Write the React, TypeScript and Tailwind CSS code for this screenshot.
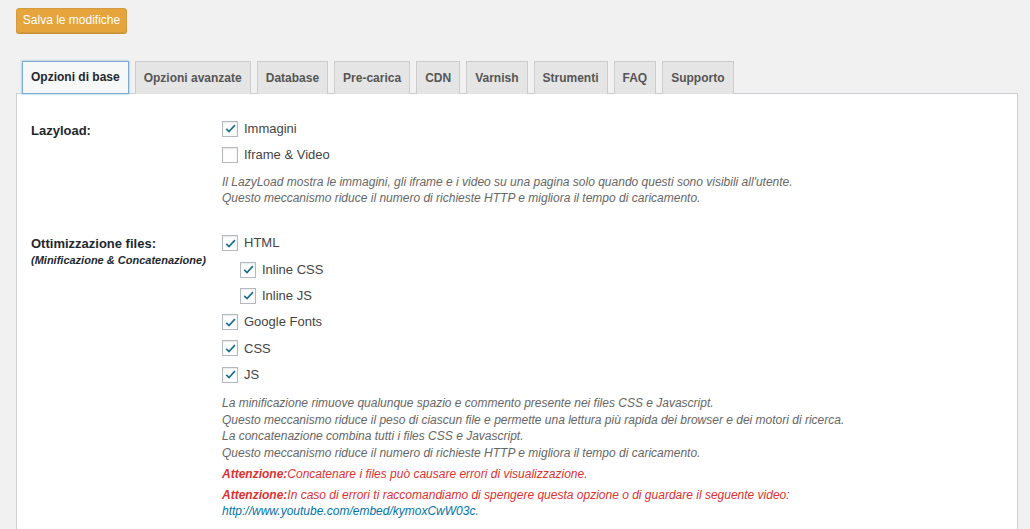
import React from 'react'

const font = { fontFamily: '"Liberation Sans", Arial, sans-serif' }

const tabs = ['Opzioni di base', 'Opzioni avanzate', 'Database', 'Pre-carica', 'CDN', 'Varnish', 'Strumenti', 'FAQ', 'Supporto']

const Check: React.FC<{ checked?: boolean; label: string; indent?: boolean }> = ({ checked, label, indent }) => (
  <div className={`flex items-center h-[26.3px] ${indent ? 'pl-[18px]' : ''}`}>
    <span className="w-[16px] h-[16px] border border-[#b4b9be] bg-white shadow-[inset_0_1px_2px_rgba(0,0,0,0.1)] flex items-center justify-center">
      {checked && (
        <svg width="13" height="13" viewBox="0 0 20 20">
          <path d="M3.5 10.5l4.2 4.2L16.8 4.8" fill="none" stroke="#1e6e8c" strokeWidth="2.6" />
        </svg>
      )}
    </span>
    <span className="ml-[6px] text-[13px] text-[#444]">{label}</span>
  </div>
)

export default function App() {
  return (
    <div className="min-h-screen bg-[#f1f1f1] pl-[16px] pr-[12px] pt-[7px] overflow-hidden" style={font}>
      <button className="h-[25px] w-[111px] rounded-[3px] bg-[#e6a43c] border border-[#d39a3f] text-white text-[12px] shadow-[0_1px_0_#c99036]">
        Salva le modifiche
      </button>

      {/* tabs */}
      <div className="flex gap-[6px] pl-[6px] mt-[28px]">
        {tabs.map((t, i) => (
          <div
            key={t}
            className={`h-[33px] px-[8px] flex items-center text-[12px] font-semibold border ${
              i === 0
                ? 'bg-[#f6f7f7] border-[#7ea9d4] text-[#23282d] shadow-[0_0_2px_rgba(30,140,190,0.6)] relative z-10'
                : 'bg-[#e5e5e5] border-[#ccc] border-b-0 text-[#555]'
            }`}
          >
            {t}
          </div>
        ))}
      </div>

      <div className="bg-white border border-[#ccd0d4] -mt-px h-[460px] pl-[14px] pt-[22px]">
        {/* Lazyload */}
        <div className="flex">
          <div className="w-[191px] pt-[5px] text-[13px] font-semibold text-[#23282d]">Lazyload:</div>
          <div>
            <Check checked label="Immagini" />
            <Check label="Iframe & Video" />
            <div className="mt-[6px] text-[12px] italic leading-[16px] text-[#666]">
              <p>Il LazyLoad mostra le immagini, gli iframe e i video su una pagina solo quando questi sono visibili all'utente.</p>
              <p>Questo meccanismo riduce il numero di richieste HTTP e migliora il tempo di caricamento.</p>
            </div>
          </div>
        </div>

        {/* Ottimizzazione */}
        <div className="flex mt-[24px]">
          <div className="w-[191px] pt-[5px] text-[13px] font-semibold text-[#23282d] leading-[17px]">
            <p>Ottimizzazione files:</p>
            <p className="italic text-[11px]">(Minificazione &amp; Concatenazione)</p>
          </div>
          <div>
            <Check checked label="HTML" />
            <Check checked indent label="Inline CSS" />
            <Check checked indent label="Inline JS" />
            <Check checked label="Google Fonts" />
            <Check checked label="CSS" />
            <Check checked label="JS" />
            <div className="mt-[7px] text-[12px] italic leading-[16.7px] text-[#666]">
              <p>La minificazione rimuove qualunque spazio e commento presente nei files CSS e Javascript.</p>
              <p>Questo meccanismo riduce il peso di ciascun file e permette una lettura più rapida dei browser e dei motori di ricerca.</p>
              <p>La concatenazione combina tutti i files CSS e Javascript.</p>
              <p>Questo meccanismo riduce il numero di richieste HTTP e migliora il tempo di caricamento.</p>
            </div>
            <p className="mt-[4px] text-[12px] italic leading-[16px] text-[#dc3232]">
              <b>Attenzione:</b>Concatenare i files può causare errori di visualizzazione.
            </p>
            <p className="mt-[5px] text-[12px] italic leading-[16px] text-[#dc3232]">
              <b>Attenzione:</b>In caso di errori ti raccomandiamo di spengere questa opzione o di guardare il seguente video:
            </p>
            <a className="block text-[12px] italic leading-[16px] text-[#0073aa]">http://www.youtube.com/embed/kymoxCwW03c.</a>
          </div>
        </div>
      </div>
    </div>
  )
}
